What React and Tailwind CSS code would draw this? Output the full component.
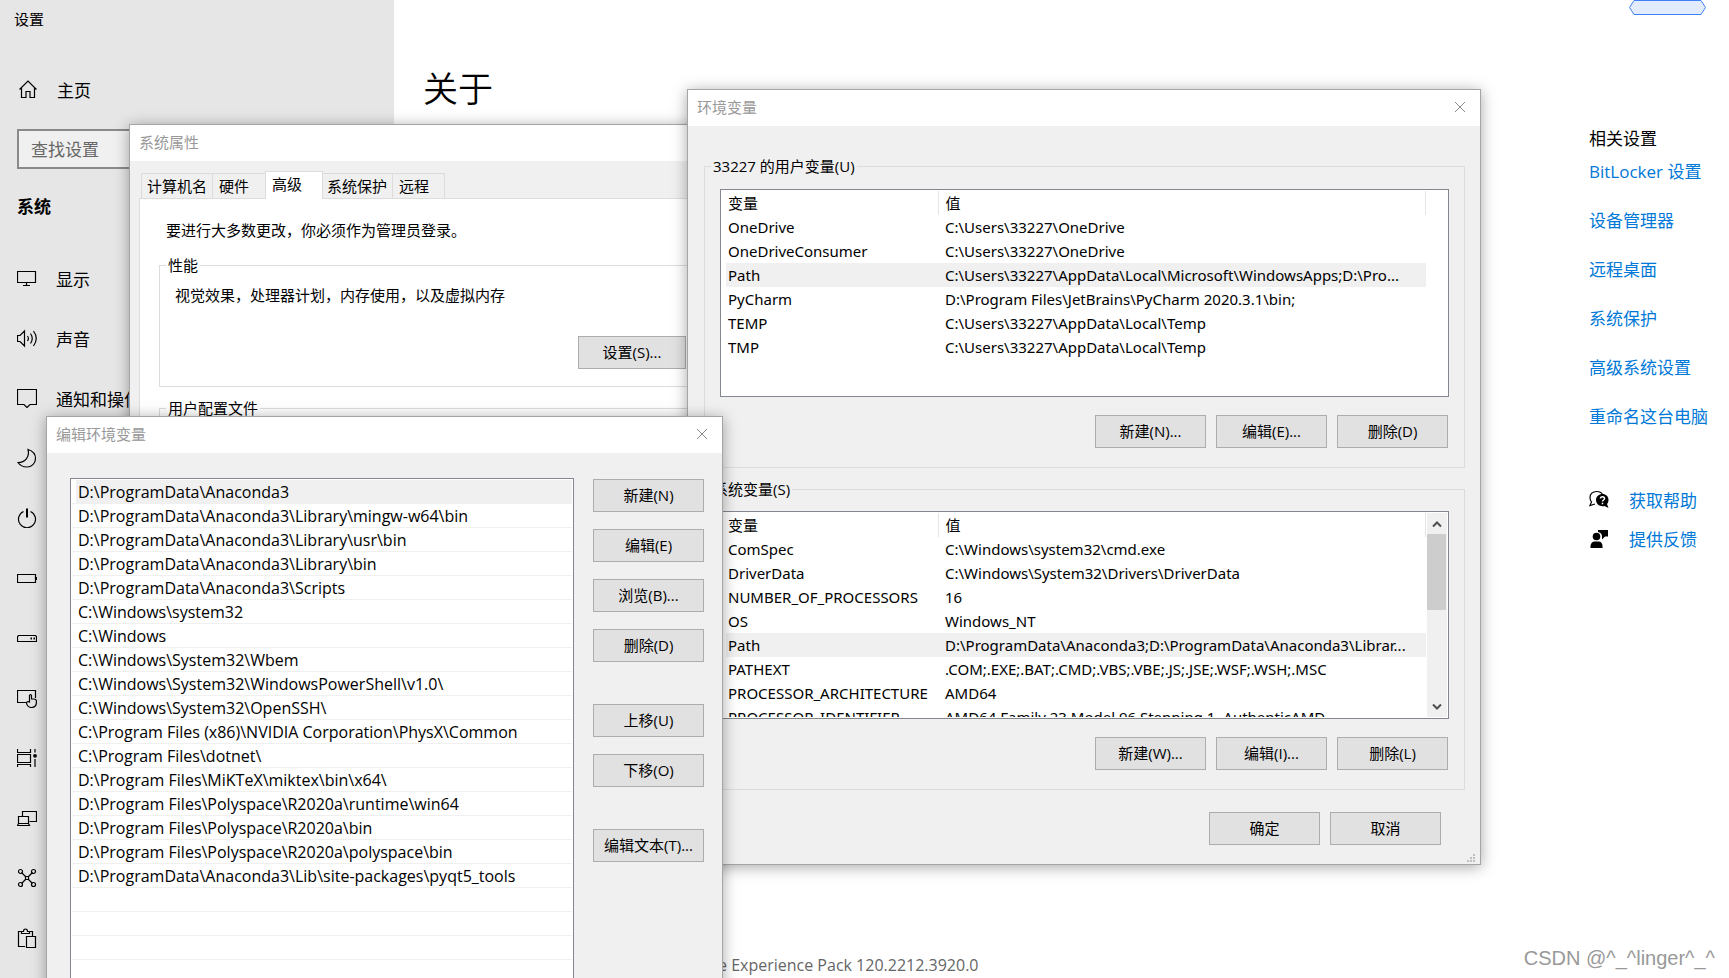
import React, { useState } from "react";

const navItems = [
  { id: "display", label: "显示", showLabel: true },
  { id: "sound", label: "声音", showLabel: true },
  { id: "notice", label: "通知和操作", showLabel: true },
  { id: "focus", label: "专注助手" },
  { id: "power", label: "电源和睡眠" },
  { id: "battery", label: "电池" },
  { id: "storage", label: "存储" },
  { id: "tablet", label: "平板电脑" },
  { id: "multitask", label: "多任务处理" },
  { id: "project", label: "投影到此电脑" },
  { id: "shared", label: "体验共享" },
  { id: "clipboard", label: "剪贴板" },
];

const relatedLinks = [
  "BitLocker 设置",
  "设备管理器",
  "远程桌面",
  "系统保护",
  "高级系统设置",
  "重命名这台电脑",
];

const tabs = [
  { name: "计算机名", style: "h-[25px] w-[71px] border-l border-t pl-[5px]" },
  { name: "硬件", style: "h-[25px] w-[53px] border-l border-t pl-[6px]" },
  {
    name: "高级",
    style: "relative -mb-px h-[28px] w-[58px] border border-b-0 bg-white pb-1 pl-[6px]",
  },
  { name: "系统保护", style: "h-[25px] w-[69px] border-t pl-[4px]" },
  { name: "远程", style: "h-[25px] w-[53px] border-l border-r border-t pl-[6px]" },
];

const userVars = [
  ["OneDrive", "C:\\Users\\33227\\OneDrive"],
  ["OneDriveConsumer", "C:\\Users\\33227\\OneDrive"],
  [
    "Path",
    "C:\\Users\\33227\\AppData\\Local\\Microsoft\\WindowsApps;D:\\Pro...",
  ],
  ["PyCharm", "D:\\Program Files\\JetBrains\\PyCharm 2020.3.1\\bin;"],
  ["TEMP", "C:\\Users\\33227\\AppData\\Local\\Temp"],
  ["TMP", "C:\\Users\\33227\\AppData\\Local\\Temp"],
];

const systemVars = [
  ["ComSpec", "C:\\Windows\\system32\\cmd.exe"],
  ["DriverData", "C:\\Windows\\System32\\Drivers\\DriverData"],
  ["NUMBER_OF_PROCESSORS", "16"],
  ["OS", "Windows_NT"],
  ["Path", "D:\\ProgramData\\Anaconda3;D:\\ProgramData\\Anaconda3\\Librar..."],
  ["PATHEXT", ".COM;.EXE;.BAT;.CMD;.VBS;.VBE;.JS;.JSE;.WSF;.WSH;.MSC"],
  ["PROCESSOR_ARCHITECTURE", "AMD64"],
  ["PROCESSOR_IDENTIFIER", "AMD64 Family 23 Model 96 Stepping 1, AuthenticAMD"],
];

const paths = [
  "D:\\ProgramData\\Anaconda3",
  "D:\\ProgramData\\Anaconda3\\Library\\mingw-w64\\bin",
  "D:\\ProgramData\\Anaconda3\\Library\\usr\\bin",
  "D:\\ProgramData\\Anaconda3\\Library\\bin",
  "D:\\ProgramData\\Anaconda3\\Scripts",
  "C:\\Windows\\system32",
  "C:\\Windows",
  "C:\\Windows\\System32\\Wbem",
  "C:\\Windows\\System32\\WindowsPowerShell\\v1.0\\",
  "C:\\Windows\\System32\\OpenSSH\\",
  "C:\\Program Files (x86)\\NVIDIA Corporation\\PhysX\\Common",
  "C:\\Program Files\\dotnet\\",
  "D:\\Program Files\\MiKTeX\\miktex\\bin\\x64\\",
  "D:\\Program Files\\Polyspace\\R2020a\\runtime\\win64",
  "D:\\Program Files\\Polyspace\\R2020a\\bin",
  "D:\\Program Files\\Polyspace\\R2020a\\polyspace\\bin",
  "D:\\ProgramData\\Anaconda3\\Lib\\site-packages\\pyqt5_tools",
];

const EMPTY_ROWS = 5;

const icons = {
  home: (
    <path d="M1.500 10.500L10 2l8.500 8.500M3.500 9v9.500h4.500v-6h4v6h4.500V9" />
  ),
  display: <path d="M.5 3.500h18v11H.5zM9.500 14.500v3M6 17.500h7" />,
  sound: (
    <path d="M.5 7.500h2.500l4.500-4.500v15L3 13.500H.5zM10.500 8q1.800 2.500 0 5M13.500 5.500q3.500 5 0 10M16.500 3q5.500 7.500 0 15" />
  ),
  notice: <path d="M.5 1.500h19v15h-6.500l-3 3-3-3H.5z" />,
  focus: (
    <path d="M11 1.500C16 3 18.500 6.500 18.500 10.500c0 5-4 8.500-8.500 8.500-4 0-7-1.500-9-4.500C8 14.500 13 9 11 1.500z" />
  ),
  power: (
    <>
      <path d="M6.500 3.500a8.500 8.500 0 1 0 7 0" />
      <path d="M10 .5v9" strokeWidth="2" />
    </>
  ),
  battery: (
    <>
      <path d="M.5 6.500h18v8H.5z" />
      <path d="M19.500 9v3" />
    </>
  ),
  storage: (
    <>
      <path d="M1.500 7.500h17l1 1v5H.5v-5z" />
      <path d="M13.500 10.500h1.500M16.500 10.500h1.500" strokeWidth="2" />
    </>
  ),
  tablet: (
    <>
      <path d="M9 14.500H.5v-12h18V10" />
      <path d="M12.500 14V7.500q1-2 2 0V11h2.500q2.500 0 2.500 2.500c0 4-2 6-5 6s-4.500-2-5-4.500q.5-2 3-1z" />
    </>
  ),
  multitask: (
    <>
      <path d="M.5 1v3.500h13V1M.5 6.500h13v8H.5zM.5 19v-2.500h13V19M18 1v3.500M18 11v8" />
      <circle cx="18" cy="7.800" r="1.900" fill="currentColor" stroke="none" />
    </>
  ),
  project: (
    <path d="M5.500 8V3.500h14v10h-7M1.500 8.500h10v7h-10zM.5 17.500h12l-1-2h-10z" />
  ),
  shared: (
    <>
      <path d="M8.500 8.500h3v3h-3zM4.500 4.500l4 4M15.500 4.500l-4 4M4.500 15.500l4-4M15.500 15.500l-4-4" />
      <circle cx="3.500" cy="3.500" r="2" />
      <circle cx="16.500" cy="3.500" r="2" />
      <circle cx="3.500" cy="16.500" r="2" />
      <circle cx="16.500" cy="16.500" r="2" />
    </>
  ),
  clipboard: (
    <path d="M8 18.500H1.500v-15h3M12.500 3.500h3V8M4.500 5.500v-2h2q0-2.500 2-2.500t2 2.500h2v2zM9.500 8.500h9v11h-9z" />
  ),
};

const Icon = ({ name }) => (
  <svg
    viewBox="0 0 20 20"
    className="mb-1 h-5 w-5 shrink-0"
    fill="none"
    stroke="currentColor"
    strokeWidth="1.200"
  >
    {icons[name]}
  </svg>
);

const HelpIcon = () => (
  <svg viewBox="0 0 20 20" className="mb-[2px] h-5 w-5 shrink-0">
    <path
      d="M13.500 4.500C12.500 2.500 10.500 1.500 7.500 1.500 3.500 1.500 1 4 1 7.500c0 2 .5 3.500 1.500 4.500L1 15.500l5-1.500"
      fill="none"
      stroke="black"
      strokeWidth="1.200"
    />
    <path
      d="M13.500 4c3.500 0 6 2.500 6 6 0 1.500-.5 3-1.500 4l1.500 4-4-2c-4.500 1-8.500-2-8.500-6 0-3.500 3-6 6.500-6z"
      fill="black"
    />
    <path
      d="M11.500 8.500c0-2.500 4-2.500 4 0 0 1.500-2 1.500-2 3M13.500 12.800v1.400"
      fill="none"
      stroke="white"
      strokeWidth="1.500"
    />
  </svg>
);

const FeedbackIcon = () => (
  <svg viewBox="0 0 20 20" className="mb-[2px] h-5 w-5 shrink-0">
    <circle cx="7.500" cy="7.500" r="3.800" />
    <path d="M1.500 19v-2c0-2.500 2-4.500 4-4.500h4c2.500 0 4 2 4 4.500v2z" />
    <path d="M9 1h10v6.500h-3l-3 3v-3c0-2.500-1.500-4-4-4.500z" />
  </svg>
);

const WinButton = ({ children, className = "w-[111px]" }) => (
  <button
    type="button"
    className={`h-[33px] shrink-0 border border-[#adadad] bg-[#e1e1e1] pb-[2px] text-center text-[15px] leading-5 text-black ${className}`}
  >
    {children}
  </button>
);

const TitleBar = ({ title, closable = true }) => (
  <div className="flex h-9 items-center justify-between bg-white pb-[2px] pl-[9px] pr-[14px]">
    <h2 className="text-[15px] leading-5 text-[#999999]">{title}</h2>
    {closable && (
      <button type="button" aria-label="关闭">
        <svg viewBox="0 0 12 12" className="h-3 w-3" stroke="#8a8a8a">
          <path d="M1 1l10 10M11 1L1 11" />
        </svg>
      </button>
    )}
  </div>
);

const GroupBox = ({ title, className = "", children }) => (
  <fieldset className={`border border-[#dcdcdc] ${className}`}>
    <legend className="ml-[6px] px-[2px] text-[15px] leading-5">{title}</legend>
    {children}
  </fieldset>
);

const VarTable = ({ rows, scroll = false }) => {
  const [selected, setSelected] = useState("Path");

  return (
    <div className="flex h-[208px] justify-between overflow-hidden border border-[#828790] bg-white p-px">
      <div className="overflow-hidden pl-1">
        <table className="w-[700px] table-fixed border-collapse text-left font-['Noto_Sans','Noto_Sans_CJK_SC',sans-serif] text-[15px] leading-6">
          <thead>
            <tr className="h-6">
              <th className="w-[212px] border-r border-[#e5e5e5] p-0 pl-[2px] font-normal">
                变量
              </th>
              <th className="border-r border-[#e5e5e5] p-0 pl-[7px] font-normal">
                值
              </th>
            </tr>
          </thead>
          <tbody>
            {rows.map(([name, value]) => (
              <tr
                key={name}
                onClick={() => setSelected(name)}
                className={selected === name ? "h-6 bg-[#f0f0f0]" : "h-6"}
              >
                <td className="whitespace-nowrap p-0 pl-[2px]">{name}</td>
                <td className="whitespace-nowrap p-0 pl-[7px]">{value}</td>
              </tr>
            ))}
          </tbody>
        </table>
      </div>

      {scroll && (
        <div className="flex w-5 flex-col justify-between bg-[#f0f0f0]">
          <div>
            <button
              type="button"
              aria-label="向上"
              className="flex h-[21px] w-5 items-center justify-center"
            >
              <svg viewBox="0 0 10 8" className="h-2 w-[10px]" fill="none">
                <path d="M1 6.500l4-4 4 4" stroke="#505050" strokeWidth="2" />
              </svg>
            </button>
            <div className="h-[76px] w-[19px] bg-[#cdcdcd]" />
          </div>
          <button
            type="button"
            aria-label="向下"
            className="flex h-[21px] w-5 items-center justify-center"
          >
            <svg viewBox="0 0 10 8" className="h-2 w-[10px]" fill="none">
              <path d="M1 1.500l4 4 4-4" stroke="#505050" strokeWidth="2" />
            </svg>
          </button>
        </div>
      )}
    </div>
  );
};

const SettingsPage = () => (
  <div className="flex h-full bg-white">
    <aside className="w-[394px] shrink-0 bg-[#e6e6e6] text-[17px] leading-6">
      <div className="flex h-[38px] items-center pl-[14px] text-[15px]">设置</div>

      <a href="#home" className="mt-[33px] flex h-10 items-center gap-[19px] pl-[18px]">
        <Icon name="home" />
        <span>主页</span>
      </a>

      <div className="mt-[18px] px-[17px]">
        <input
          type="text"
          aria-label="查找设置"
          placeholder="查找设置"
          className="h-10 w-full border-2 border-[#8a8a8a] bg-[#f0f0f0] pl-3 placeholder:text-[#666666]"
        />
      </div>

      <h2 className="mt-[26px] pl-[17px] font-bold">系统</h2>

      <nav className="mt-[31px]">
        {navItems.map((item) => (
          <a
            key={item.id}
            href={`#${item.id}`}
            aria-label={item.label}
            className="flex h-[60px] items-center gap-[19px] pl-[17px]"
          >
            <Icon name={item.id} />
            {item.showLabel && <span>{item.label}</span>}
          </a>
        ))}
      </nav>
    </aside>

    <main className="flex flex-1 flex-col justify-between pl-[29px]">
      <h1 className="pt-[65px] text-[35px] font-[350] leading-[48px]">关于</h1>
      <p className="pb-px pl-[295px] text-[16px] leading-6 text-[#666666]">
        e Experience Pack 120.2212.3920.0
      </p>
    </main>

    <aside className="flex w-[140px] shrink-0 flex-col text-[17px] leading-6">
      <svg
        viewBox="0 0 78 15"
        className="ml-10 h-[15px] w-[78px] shrink-0"
        fill="#e3ecfd"
        stroke="#3f82f7"
      >
        <path d="M5 .5h67l4.500 7-4.500 7H5L.5 7.500z" />
      </svg>
      <h2 className="mt-[112px]">相关设置</h2>
      <ul className="mt-[9px] flex flex-col gap-[25px] whitespace-nowrap text-[#0078d7]">
        {relatedLinks.map((link) => (
          <li key={link}>
            <a href="#related">{link}</a>
          </li>
        ))}
      </ul>
      <div className="mt-[60px] flex flex-col gap-[15px] text-[#0078d7]">
        <a href="#help" className="flex items-center gap-5">
          <HelpIcon />
          获取帮助
        </a>
        <a href="#feedback" className="flex items-center gap-5">
          <FeedbackIcon />
          提供反馈
        </a>
      </div>
    </aside>
  </div>
);

const SystemProperties = () => (
  <section className="absolute left-[129px] top-[124px] w-[620px] border border-[#a5a5a5] bg-[#f0f0f0] shadow-[0_2px_14px_rgba(0,0,0,0.35)]">
    <TitleBar title="系统属性" closable={false} />
    <div className="px-[9px] pb-3 pt-[10px]">
      <div className="flex items-end pl-[2px]">
        {tabs.map((tab) => (
          <button
            key={tab.name}
            type="button"
            className={`whitespace-nowrap border-[#dcdcdc] text-left text-[15px] leading-5 ${tab.style}`}
          >
            {tab.name}
          </button>
        ))}
      </div>
      <div className="h-[300px] border border-[#dcdcdc] bg-white px-[19px] pt-[21px] text-[15px] leading-5">
        <p className="pl-[7px]">要进行大多数更改，你必须作为管理员登录。</p>
        <GroupBox title="性能" className="mt-[15px]">
          <div className="pb-[17px] pl-[15px] pt-[10px]">
            <p>视觉效果，处理器计划，内存使用，以及虚拟内存</p>
            <WinButton className="ml-[403px] mt-[31px] block w-[108px]">
              设置(S)...
            </WinButton>
          </div>
        </GroupBox>
        <GroupBox title="用户配置文件" className="mt-[11px] h-20" />
      </div>
    </div>
  </section>
);

const EnvironmentVariables = () => (
  <section className="absolute left-[687px] top-[89px] w-[794px] border border-[#a5a5a5] bg-[#f0f0f0] shadow-[0_2px_14px_rgba(0,0,0,0.35)]">
    <TitleBar title="环境变量" />
    <div className="flex flex-col gap-[11px] pl-4 pr-[15px] pt-[30px]">
      <GroupBox title="33227 的用户变量(U)">
        <div className="px-[15px] pb-[19px] pt-[13px]">
          <VarTable rows={userVars} />
          <div className="mt-[18px] flex justify-end gap-[10px] pr-px">
            <WinButton>新建(N)...</WinButton>
            <WinButton>编辑(E)...</WinButton>
            <WinButton>删除(D)</WinButton>
          </div>
        </div>
      </GroupBox>
      <GroupBox title="系统变量(S)">
        <div className="px-[15px] pb-[19px] pt-3">
          <VarTable rows={systemVars} scroll />
          <div className="mt-[18px] flex justify-end gap-[10px] pr-px">
            <WinButton>新建(W)...</WinButton>
            <WinButton>编辑(I)...</WinButton>
            <WinButton>删除(L)</WinButton>
          </div>
        </div>
      </GroupBox>
    </div>
    <div className="flex justify-end gap-[10px] pb-[19px] pr-[39px] pt-[22px]">
      <WinButton>确定</WinButton>
      <WinButton>取消</WinButton>
    </div>
    <svg
      viewBox="0 0 8 8"
      className="absolute bottom-[2px] right-[5px] h-2 w-2"
      fill="#bfbfbf"
    >
      <path d="M6 0h2v2H6zM3 3h2v2H3zM6 3h2v2H6zM0 6h2v2H0zM3 6h2v2H3zM6 6h2v2H6z" />
    </svg>
  </section>
);

const EditVariable = () => {
  const [selected, setSelected] = useState(0);

  return (
    <section className="absolute left-[46px] top-[416px] w-[677px] border border-[#a5a5a5] bg-[#f0f0f0] shadow-[0_2px_14px_rgba(0,0,0,0.35)]">
      <TitleBar title="编辑环境变量" />
      <div className="flex gap-[19px] pb-6 pl-[23px] pr-[18px] pt-[25px]">
        <ul className="flex-1 border border-[#828790] bg-white p-px text-[16px] leading-[25px]">
          {paths.map((path, index) => (
            <li
              key={path}
              onClick={() => setSelected(index)}
              className="h-6 border-b border-[#f0f0f0] pl-1"
            >
              <div
                className={
                  selected === index
                    ? "h-[23px] bg-[#f0f0f0] pl-[2px]"
                    : "h-[23px] pl-[2px]"
                }
              >
                {path}
              </div>
            </li>
          ))}
          {Array.from({ length: EMPTY_ROWS }, (_, i) => (
            <li key={i} className="h-6 border-b border-[#f0f0f0]" />
          ))}
        </ul>

        <div className="flex flex-col gap-[42px] pt-px">
          <div className="flex flex-col gap-[17px]">
            <WinButton>新建(N)</WinButton>
            <WinButton>编辑(E)</WinButton>
            <WinButton>浏览(B)...</WinButton>
            <WinButton>删除(D)</WinButton>
          </div>
          <div className="flex flex-col gap-[17px]">
            <WinButton>上移(U)</WinButton>
            <WinButton>下移(O)</WinButton>
          </div>
          <WinButton>编辑文本(T)...</WinButton>
        </div>
      </div>
    </section>
  );
};

const App = () => {
  return (
    <div className="relative h-screen overflow-hidden font-['Open_Sans','Noto_Sans_CJK_SC',sans-serif] text-black">
      <SettingsPage />

      {/* Open dialogs, back to front */}
      <SystemProperties />
      <EnvironmentVariables />
      <EditVariable />

      <span className="absolute bottom-[8px] right-[14px] font-['Liberation_Sans',sans-serif] text-[20px] leading-6 text-[#999999]">
        CSDN @^_^linger^_^
      </span>
    </div>
  );
};

export default App;
